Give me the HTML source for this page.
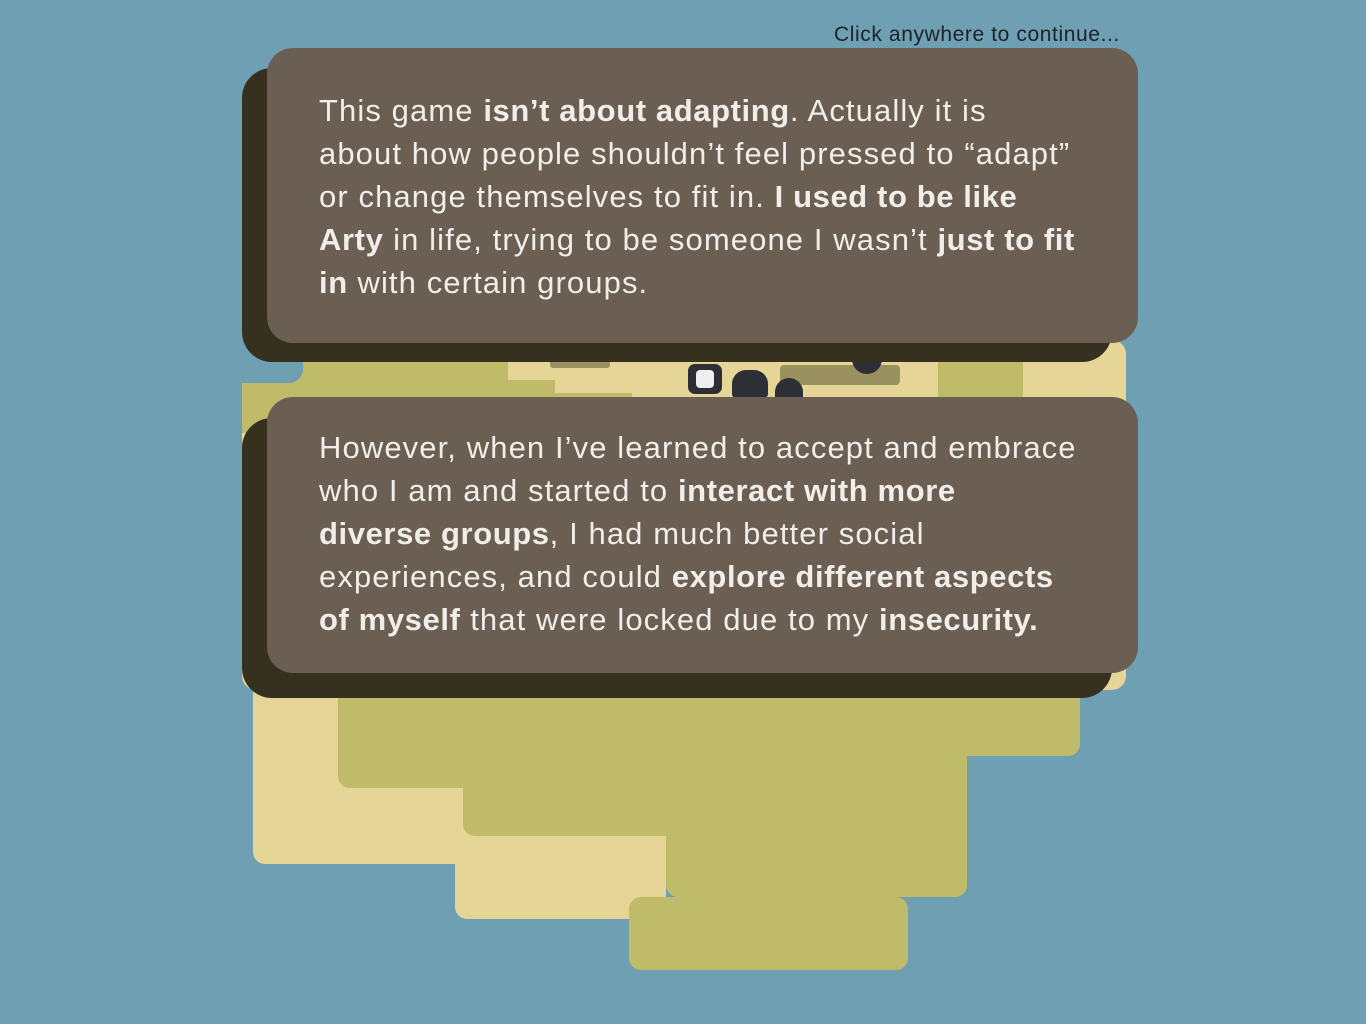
<!DOCTYPE html>
<html><head><meta charset="utf-8"><style>
html,body{margin:0;padding:0}
body{width:1366px;height:1024px;background:#6f9fb3;position:relative;overflow:hidden;font-family:"Liberation Sans",sans-serif}
.a{position:absolute}
.s{background:#e5d597}
.g{background:#c0bb69}
.sh{background:#36301f;border-radius:30px}
.c{background:#6a5f52;border-radius:26px}
.t{position:absolute;left:319px;color:#f1eee9;font-size:31px;line-height:43px;letter-spacing:1.1px;white-space:nowrap}
.t b{font-weight:bold;letter-spacing:0.6px}
.d{background:#2e2e36}
</style></head><body>
<div class="a" style="left:834px;top:23px;font-size:21px;color:#1e2228;letter-spacing:0.6px">Click anywhere to continue...</div>

<!-- island middle -->
<div class="a s" style="left:242px;top:340px;width:884px;height:350px;border-radius:14px"></div>
<div class="a g" style="left:242px;top:340px;width:266px;height:80px;border-radius:0 0 10px 0"></div>
<div class="a g" style="left:242px;top:380px;width:313px;height:40px;border-radius:0 0 10px 0"></div>
<div class="a g" style="left:242px;top:393px;width:390px;height:40px"></div>
<div class="a" style="left:242px;top:340px;width:61px;height:43px;background:#6f9fb3;border-radius:0 0 14px 0"></div>
<div class="a g" style="left:938px;top:340px;width:85px;height:70px;border-radius:0 0 10px 10px"></div>
<div class="a" style="left:550px;top:360px;width:60px;height:8px;background:#9b9060;border-radius:3px"></div>
<div class="a" style="left:780px;top:365px;width:120px;height:20px;background:#9b9060;border-radius:4px"></div>
<div class="a d" style="left:688px;top:364px;width:34px;height:30px;border-radius:7px"></div>
<div class="a" style="left:696px;top:370px;width:18px;height:18px;background:#eee;border-radius:4px"></div>
<div class="a d" style="left:732px;top:370px;width:36px;height:28px;border-radius:14px 14px 4px 4px"></div>
<div class="a d" style="left:775px;top:378px;width:28px;height:20px;border-radius:14px 14px 0 0"></div>
<div class="a d" style="left:852px;top:350px;width:30px;height:24px;border-radius:0 0 15px 15px"></div>

<!-- island lower -->
<div class="a s" style="left:253px;top:680px;width:230px;height:184px;border-radius:0 0 12px 12px"></div>
<div class="a s" style="left:455px;top:800px;width:211px;height:119px;border-radius:12px"></div>
<div class="a g" style="left:338px;top:680px;width:742px;height:76px;border-radius:0 0 12px 12px"></div>
<div class="a g" style="left:338px;top:680px;width:629px;height:108px;border-radius:0 0 12px 12px"></div>
<div class="a g" style="left:463px;top:760px;width:504px;height:76px;border-radius:0 0 12px 12px"></div>
<div class="a g" style="left:666px;top:800px;width:301px;height:97px;border-radius:0 12px 12px 12px"></div>
<div class="a g" style="left:629px;top:897px;width:279px;height:73px;border-radius:12px"></div>

<!-- cards -->
<div class="a sh" style="left:242px;top:68px;width:870px;height:294px"></div>
<div class="a c" style="left:267px;top:48px;width:871px;height:295px"></div>
<div class="t" style="top:89px">This game <b>isn’t about adapting</b>. Actually it is<br>about how people shouldn’t feel pressed to “adapt”<br>or change themselves to fit in. <b>I used to be like</b><br><b>Arty</b> in life, trying to be someone I wasn’t <b>just to fit</b><br><b>in</b> with certain groups.</div>

<div class="a sh" style="left:242px;top:418px;width:870px;height:280px"></div>
<div class="a c" style="left:267px;top:397px;width:871px;height:276px"></div>
<div class="t" style="top:426px">However, when I’ve learned to accept and embrace<br>who I am and started to <b>interact with more</b><br><b>diverse groups</b>, I had much better social<br>experiences, and could <b>explore different aspects</b><br><b>of myself</b> that were locked due to my <b>insecurity.</b></div>
</body></html>
